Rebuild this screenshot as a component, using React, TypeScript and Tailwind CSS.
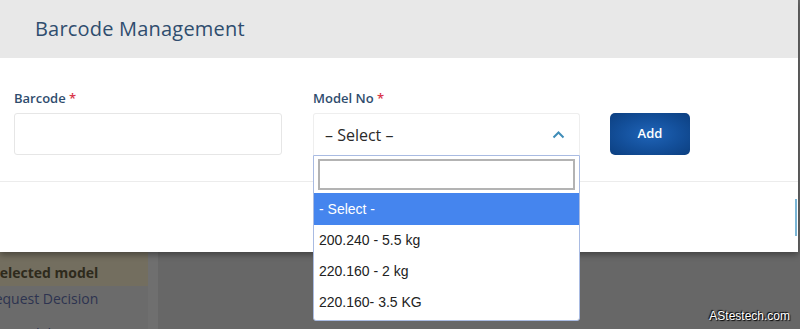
import React from "react";

export default function App() {
  const sans = { fontFamily: '"Open Sans", "DejaVu Sans", sans-serif' };
  const opt = { fontFamily: '"Liberation Sans", Arial, sans-serif' };
  return (
    <div className="relative w-[800px] h-[329px] overflow-hidden bg-[#676767]" style={sans}>
      {/* background page (dimmed) */}
      <div className="flex h-full">
        <div className="w-[148px] h-full bg-[#6b6b6b] flex flex-col pt-[240px] overflow-hidden">
          <div className="shrink-0 h-[46px] bg-[#736e5f] flex flex-col justify-end pb-[6px] -ml-[8px]">
            <div className="text-[14px] font-bold text-[#2e2a1c] leading-[18px] -mb-[2px]">Selected model</div>
          </div>
          <div className="shrink-0 h-[26px] -ml-[14px] pt-[3px] text-[14px] text-[#2d3350] leading-[20px]">Request Decision</div>
          <div className="shrink-0 pl-[10px] pt-[12px] text-[14px] text-[#2d3350] leading-[20px]">Model No (2)</div>
        </div>
        <div className="w-[10px] h-full bg-[#6f6f6f]" />
        <div className="flex-1" />
      </div>

      {/* modal */}
      <div className="absolute left-0 top-0 w-[798px] h-[252px] bg-white shadow-[0_3px_6px_rgba(0,0,0,0.35)] flex flex-col">
        <div className="h-[58px] bg-[#e8e8e8] flex items-center pl-[35px]">
          <div className="text-[20px] text-[#2f4d6e] tracking-[0.2px]">Barcode Management</div>
        </div>
        <div className="h-[124px] border-b border-[#ececec] flex items-start pt-[30px] pl-[14px]">
          <div className="w-[268px] flex flex-col">
            <div className="text-[13px] font-semibold text-[#2f4d6e] leading-[20px] h-[25px]">
              Barcode <span className="text-[#d9364a]">*</span>
            </div>
            <div className="h-[42px] border border-[#e6e6e6] rounded-[3px]" />
          </div>
          <div className="w-[267px] ml-[31px] flex flex-col">
            <div className="text-[13px] font-semibold text-[#2f4d6e] leading-[20px] h-[25px]">
              Model No <span className="text-[#d9364a]">*</span>
            </div>
            <div className="h-[42px] border border-[#eeeeee] border-b-0 rounded-t-[3px] flex items-center justify-between pl-[11px] pr-[14px]">
              <span className="text-[16px] text-[#2a2a2a]">– Select –</span>
              <svg width="13" height="9" viewBox="0 0 13 9">
                <path d="M1.5 7.5 L6.5 2.5 L11.5 7.5" fill="none" stroke="#3f8db8" strokeWidth="2" />
              </svg>
            </div>
          </div>
          <div className="ml-[30px] mt-[25px] w-[80px] h-[42px] rounded-[5px] bg-[radial-gradient(ellipse_at_center,#1f64b8_0%,#134f9a_55%,#0c3f80_100%)] flex items-center justify-center">
            <span className="text-white text-[13px] font-semibold">Add</span>
          </div>
        </div>
        <div className="flex-1 flex justify-end items-start pt-[17px]">
          <div className="w-[3px] h-[37px] border-l-[2px] border-[#7ab6d6]" />
        </div>
      </div>

      {/* dropdown */}
      <div className="absolute left-[313px] top-[155px] w-[267px] h-[166px] bg-white border border-[#a9bbe2] rounded-b-[3px] flex flex-col" style={opt}>
        <div className="px-[4px] pt-[3px] pb-[3px]">
          <div className="h-[31px] border-[2px] border-[#b3b3b3] bg-white" />
        </div>
        <div className="h-[32px] bg-[#4585ee] flex items-center pl-[5px] text-[14px] text-white">- Select -</div>
        <div className="h-[31px] flex items-center pl-[5px] text-[14px] text-[#222222]">200.240 - 5.5 kg</div>
        <div className="h-[31px] flex items-center pl-[5px] text-[14px] text-[#222222]">220.160 - 2 kg</div>
        <div className="h-[31px] flex items-center pl-[5px] text-[14px] text-[#222222]">220.160- 3.5 KG</div>
      </div>

      {/* watermark */}
      <div className="absolute right-[10px] bottom-[4px] text-[12px] text-white [text-shadow:1px_1px_1px_#000,-1px_-1px_1px_#000]" style={opt}>
        AStestech.com
      </div>
    </div>
  );
}
